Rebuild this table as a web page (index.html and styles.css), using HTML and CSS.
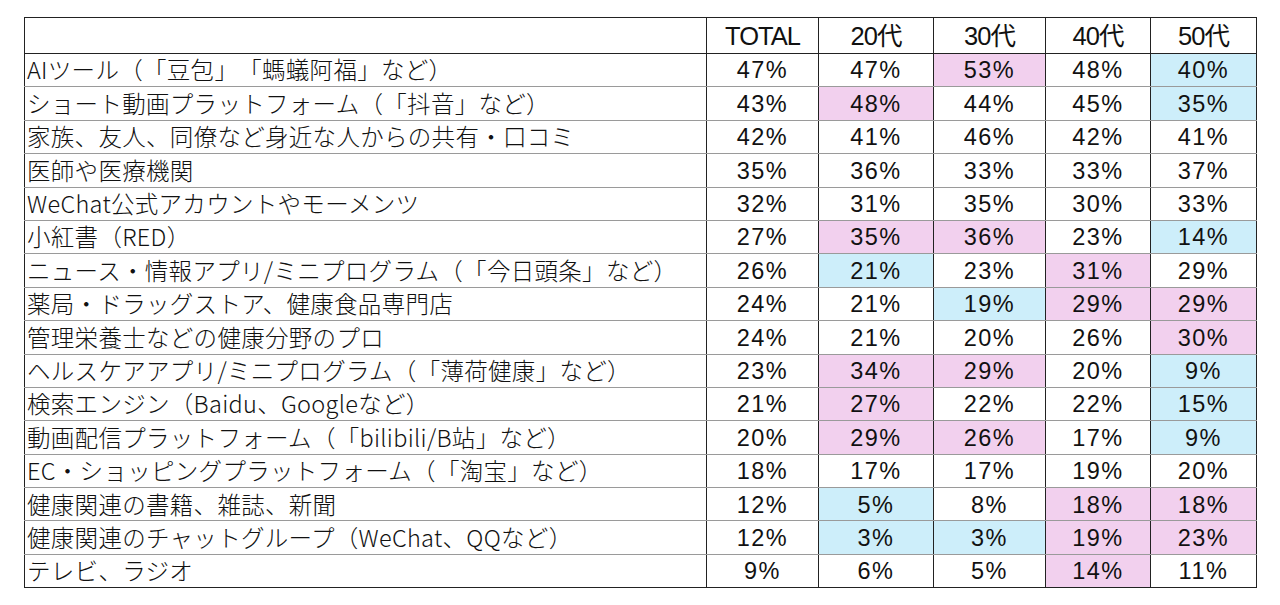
FILE: index.html
```html
<!DOCTYPE html>
<html lang="ja">
<head>
<meta charset="utf-8">
<link rel="stylesheet" href="styles.css">
</head>
<body>
<div class="wrap">
<table class="t">
<colgroup>
<col class="c-label"><col class="c-total"><col class="c-20"><col class="c-30"><col class="c-40"><col class="c-50">
</colgroup>
<thead>
<tr><th></th><th>TOTAL</th><th>20代</th><th>30代</th><th>40代</th><th>50代</th></tr>
</thead>
<tbody>
<tr><td>AIツール（「豆包」「螞蟻阿福」など）</td><td>47%</td><td>47%</td><td class="hi">53%</td><td>48%</td><td class="lo">40%</td></tr>
<tr><td>ショート動画プラットフォーム（「抖音」など）</td><td>43%</td><td class="hi">48%</td><td>44%</td><td>45%</td><td class="lo">35%</td></tr>
<tr><td>家族、友人、同僚など身近な人からの共有・口コミ</td><td>42%</td><td>41%</td><td>46%</td><td>42%</td><td>41%</td></tr>
<tr><td>医師や医療機関</td><td>35%</td><td>36%</td><td>33%</td><td>33%</td><td>37%</td></tr>
<tr><td>WeChat公式アカウントやモーメンツ</td><td>32%</td><td>31%</td><td>35%</td><td>30%</td><td>33%</td></tr>
<tr><td>小紅書（RED）</td><td>27%</td><td class="hi">35%</td><td class="hi">36%</td><td>23%</td><td class="lo">14%</td></tr>
<tr><td>ニュース・情報アプリ/ミニプログラム（「今日頭条」など）</td><td>26%</td><td class="lo">21%</td><td>23%</td><td class="hi">31%</td><td>29%</td></tr>
<tr><td>薬局・ドラッグストア、健康食品専門店</td><td>24%</td><td>21%</td><td class="lo">19%</td><td class="hi">29%</td><td class="hi">29%</td></tr>
<tr><td>管理栄養士などの健康分野のプロ</td><td>24%</td><td>21%</td><td>20%</td><td>26%</td><td class="hi">30%</td></tr>
<tr><td>ヘルスケアアプリ/ミニプログラム（「薄荷健康」など）</td><td>23%</td><td class="hi">34%</td><td class="hi">29%</td><td>20%</td><td class="lo">9%</td></tr>
<tr><td>検索エンジン（Baidu、Googleなど）</td><td>21%</td><td class="hi">27%</td><td>22%</td><td>22%</td><td class="lo">15%</td></tr>
<tr><td>動画配信プラットフォーム（「bilibili/B站」など）</td><td>20%</td><td class="hi">29%</td><td class="hi">26%</td><td>17%</td><td class="lo">9%</td></tr>
<tr><td>EC・ショッピングプラットフォーム（「淘宝」など）</td><td>18%</td><td>17%</td><td>17%</td><td>19%</td><td>20%</td></tr>
<tr><td>健康関連の書籍、雑誌、新聞</td><td>12%</td><td class="lo">5%</td><td>8%</td><td class="hi">18%</td><td class="hi">18%</td></tr>
<tr><td>健康関連のチャットグループ（WeChat、QQなど）</td><td>12%</td><td class="lo">3%</td><td class="lo">3%</td><td class="hi">19%</td><td class="hi">23%</td></tr>
<tr><td>テレビ、ラジオ</td><td>9%</td><td>6%</td><td>5%</td><td class="hi">14%</td><td>11%</td></tr>
</tbody>
</table>
</div>
</body>
</html>
```

FILE: styles.css
```css
html, body {
  margin: 0;
  padding: 0;
  background: #ffffff;
}
.wrap {
  padding: 17px 0 0 24px;
}
.t {
  border-collapse: collapse;
  table-layout: fixed;
  width: 1232px;
  color: #111;
}
.c-label { width: 682px; }
.c-total { width: 112px; }
.c-20 { width: 115px; }
.c-30 { width: 112px; }
.c-40 { width: 105px; }
.c-50 { width: 106px; }

.t th, .t td {
  border-left: 1px solid #222;
  border-right: 1px solid #222;
  border-top: 1px solid #9a9a9a;
  border-bottom: 1px solid #9a9a9a;
  padding: 0;
  text-align: center;
  vertical-align: middle;
  white-space: nowrap;
  overflow: hidden;
}
.t thead tr {
  height: 36px;
}
.t thead th {
  border-top: 1px solid #222;
  border-bottom: 1px solid #222;
  font-family: "Liberation Sans", "Noto Sans CJK JP", sans-serif;
  font-weight: 400;
  font-size: 25.5px;
  letter-spacing: -1px;
  line-height: 1;
  padding-top: 2px;
}
.t tbody tr {
  height: 33.4px;
}
.t tbody td {
  font-family: "Liberation Sans", "Noto Sans CJK JP", sans-serif;
  font-size: 23.5px;
  letter-spacing: 1.5px;
  line-height: 1;
  padding-top: 2px;
}
.t tbody tr:last-child td {
  border-bottom: 1px solid #222;
}
.t tbody td:first-child {
  text-align: left;
  padding-left: 2px;
  padding-top: 0;
  font-family: "Noto Sans CJK JP", sans-serif;
  font-size: 23.5px;
  font-weight: 300;
  letter-spacing: 0.3px;
  text-spacing-trim: space-all;
}
.t td.hi { background: #f2d0ee; }
.t td.lo { background: #cdeefa; }
```
